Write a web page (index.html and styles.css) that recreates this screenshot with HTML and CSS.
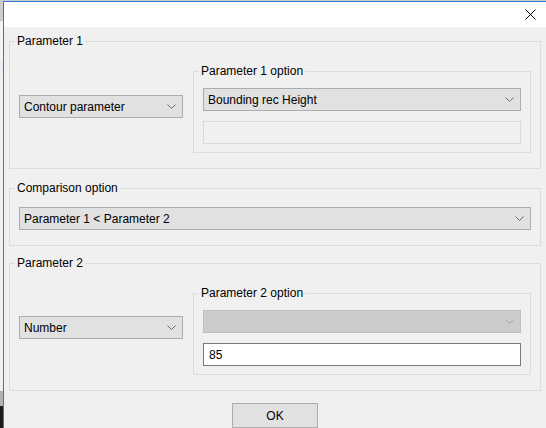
FILE: index.html
```html
<!DOCTYPE html>
<html>
<head>
<meta charset="utf-8">
<title>Dialog</title>
<link rel="stylesheet" href="styles.css">
</head>
<body>
<div class="topstrip"></div>
<div class="frame">
  <div class="behind">
    <div class="seg seg-grey"></div>
    <div class="seg seg-light"></div>
    <div class="seg seg-blue"></div>
    <div class="seg seg-light2"></div>
    <div class="seg seg-mid"></div>
    <div class="seg seg-dark"></div>
  </div>
  <div class="dialog">
    <div class="titlebar">
      <svg class="close" width="11" height="11" viewBox="0 0 11 11"><path d="M0.5 0.5L10.5 10.5M10.5 0.5L0.5 10.5" stroke="#000" stroke-width="1" fill="none"/></svg>
    </div>
    <div class="content">
      <fieldset class="group group-p1">
        <legend>Parameter 1</legend>
        <div class="gbody split">
          <div class="combo combo-side side-p1"><span>Contour parameter</span><svg class="chev" width="9" height="5" viewBox="0 0 9 5"><path d="M0.5 0.5L4.5 4.5L8.5 0.5" stroke="#6a6a6a" fill="none"/></svg></div>
          <fieldset class="group inner inner-p1">
            <legend>Parameter 1 option</legend>
            <div class="gbody inner-body">
              <div class="combo"><span>Bounding rec Height</span><svg class="chev" width="9" height="5" viewBox="0 0 9 5"><path d="M0.5 0.5L4.5 4.5L8.5 0.5" stroke="#6a6a6a" fill="none"/></svg></div>
              <div class="textbox textbox-disabled"></div>
            </div>
          </fieldset>
        </div>
      </fieldset>

      <fieldset class="group group-cmp">
        <legend>Comparison option</legend>
        <div class="gbody cmp-body">
          <div class="combo"><span>Parameter 1 &lt; Parameter 2</span><svg class="chev" width="9" height="5" viewBox="0 0 9 5"><path d="M0.5 0.5L4.5 4.5L8.5 0.5" stroke="#6a6a6a" fill="none"/></svg></div>
        </div>
      </fieldset>

      <fieldset class="group group-p2">
        <legend>Parameter 2</legend>
        <div class="gbody split">
          <div class="combo combo-side side-p2"><span>Number</span><svg class="chev" width="9" height="5" viewBox="0 0 9 5"><path d="M0.5 0.5L4.5 4.5L8.5 0.5" stroke="#6a6a6a" fill="none"/></svg></div>
          <fieldset class="group inner inner-p2">
            <legend>Parameter 2 option</legend>
            <div class="gbody inner-body">
              <div class="combo combo-disabled"><span></span><svg class="chev" width="9" height="5" viewBox="0 0 9 5"><path d="M0.5 0.5L4.5 4.5L8.5 0.5" stroke="#a8a8a8" fill="none"/></svg></div>
              <div class="textbox"><span>85</span></div>
            </div>
          </fieldset>
        </div>
      </fieldset>

      <div class="actions">
        <div class="button">OK</div>
      </div>
    </div>
  </div>
</div>
</body>
</html>
```
FILE: styles.css
```css
* { box-sizing: border-box; }
html, body { margin: 0; height: 100%; }
body {
  font-family: "Liberation Sans", Arial, sans-serif;
  font-size: 12px;
  color: #000;
  background: #f0f0f0;
  overflow: hidden;
  display: flex;
  flex-direction: column;
}
.topstrip { height: 1px; flex: none; background: #cbcbcb; }
.frame { flex: 1; display: flex; min-height: 0; }
.behind { width: 3px; flex: none; display: flex; flex-direction: column; }
.seg { flex: none; }
.seg-grey { height: 20px; background: #cdcdcd; }
.seg-light { height: 39px; background: #f3f3f3; }
.seg-blue { height: 14px; background: #e9eef5; }
.seg-light2 { height: 317px; background: #f0f0f0; }
.seg-mid { height: 15px; background: #b3b3b3; }
.seg-dark { flex: 1; background: #1c1c1c; }

.dialog {
  flex: 1;
  display: flex;
  flex-direction: column;
  border-top: 1px solid #2b7bd3;
  border-left: 1px solid #2b7bd3;
  background: #f0f0f0;
}
.titlebar {
  height: 25px;
  flex: none;
  background: #fff;
  display: flex;
  justify-content: flex-end;
  align-items: flex-start;
  padding: 7px 10px 0 0;
}
.close { display: block; }
.content { padding: 0 5px; display: flex; flex-direction: column; }

.group {
  margin: 0;
  padding: 0;
  min-width: 0;
  border: 1px solid #dcdcdc;
}
.group legend {
  margin-left: 5px;
  padding: 0 2px;
  line-height: 14px;
}
.group-p1 { margin-top: 7px; }
.group-cmp { margin-top: 12px; }
.group-p2 { margin-top: 10px; }

.gbody { padding: 0 9px 15px 9px; }
.split { display: flex; align-items: flex-start; gap: 10px; }
.inner { flex: 1; }
.inner-p1 { margin-top: 16px; }
.inner-p2 { margin-top: 16px; }
.inner-body { padding: 0 9px 8px 9px; display: flex; flex-direction: column; gap: 10px; }
.inner-body > :first-child { margin-top: 10px; }
.cmp-body { padding-top: 12px; }

.combo {
  height: 23px;
  display: flex;
  align-items: center;
  justify-content: space-between;
  padding: 0 6px 0 4px;
  background: #e1e1e1;
  border: 1px solid #adadad;
  white-space: nowrap;
}
.chev { display: block; flex: none; }
.combo-side { width: 164px; flex: none; }
.side-p1 { margin-top: 47px; }
.side-p2 { margin-top: 46px; }
.combo-disabled { background: #cccccc; border-color: #bfbfbf; }

.textbox {
  height: 23px;
  display: flex;
  align-items: center;
  padding: 0 5px;
  background: #fff;
  border: 1px solid #7a7a7a;
}
.textbox-disabled { background: #f0f0f0; border-color: #d9d9d9; }

.actions { display: flex; justify-content: center; padding-top: 12px; }
.button {
  width: 86px;
  height: 25px;
  display: flex;
  align-items: center;
  justify-content: center;
  background: #e1e1e1;
  border: 1px solid #adadad;
}
```
